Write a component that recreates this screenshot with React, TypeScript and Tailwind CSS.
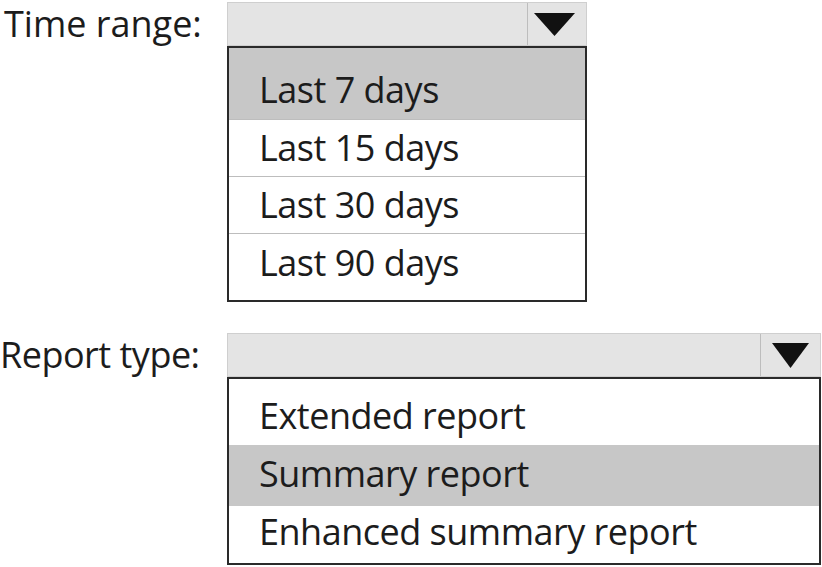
import React from "react";

const font = { fontFamily: '"Open Sans", "Noto Sans", sans-serif' };

function Arrow({ w = 40, h = 24 }: { w?: number; h?: number }) {
  return (
    <svg width={w} height={h} viewBox={`0 0 ${w} ${h}`}>
      <polygon points={`0,0 ${w},0 ${w / 2},${h}`} fill="#111" />
    </svg>
  );
}

export default function App() {
  return (
    <div className="w-[822px] h-[567px] bg-white text-[#1c1c1c] overflow-hidden pt-[2px]" style={font}>
      <div className="flex">
        <div className="w-[227px] pl-[4px] text-[36px] leading-[44px] tracking-[0px]">Time range:</div>
        <div className="w-[360px] flex flex-col">
          <div className="h-[44px] flex bg-[#e4e4e4] border border-[#cfcfcf]">
            <div className="flex-1" />
            <div className="w-[59px] border-l border-[#bdbdbd] flex items-center justify-center pr-[6px]">
              <Arrow w={41} h={23} />
            </div>
          </div>
          <div className="h-[256px] border-2 border-[#2a2a2a] flex flex-col text-[36px] tracking-[-0.5px]">
            <div className="h-[72px] bg-[#c7c7c7] pl-[30px] pt-[13px] leading-[57px] border-b border-[#bdbdbd]">Last 7 days</div>
            <div className="h-[57px] pl-[30px] leading-[56px] border-b border-[#bdbdbd]">Last 15 days</div>
            <div className="h-[57px] pl-[30px] leading-[56px] border-b border-[#bdbdbd]">Last 30 days</div>
            <div className="flex-1 pl-[30px] leading-[58px]">Last 90 days</div>
          </div>
        </div>
      </div>
      <div className="flex mt-[31px]">
        <div className="w-[227px] pl-0 text-[36px] leading-[44px] tracking-[-0.5px]">Report type:</div>
        <div className="w-[594px] flex flex-col">
          <div className="h-[44px] flex bg-[#e4e4e4] border border-[#cfcfcf]">
            <div className="flex-1" />
            <div className="w-[60px] border-l border-[#bdbdbd] flex items-center justify-center">
              <Arrow w={37} h={25} />
            </div>
          </div>
          <div className="h-[188px] border-2 border-[#2a2a2a] flex flex-col text-[36px] tracking-[-0.5px]">
            <div className="h-[66px] pl-[30px] pt-[8px] leading-[58px]">Extended report</div>
            <div className="h-[61px] bg-[#c7c7c7] pl-[30px] leading-[58px]">Summary report</div>
            <div className="flex-1 pl-[30px] leading-[52px]">Enhanced summary report</div>
          </div>
        </div>
      </div>
    </div>
  );
}
